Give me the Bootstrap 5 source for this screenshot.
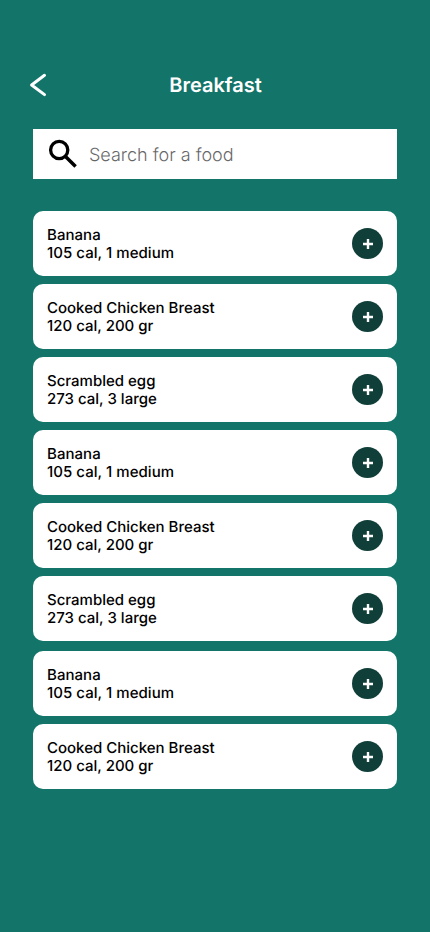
<!DOCTYPE html>
<html lang="en">
<head>
<meta charset="utf-8">
<meta name="viewport" content="width=device-width, initial-scale=1">
<title>Breakfast</title>
<link href="https://cdn.jsdelivr.net/npm/bootstrap@5.3.0/dist/css/bootstrap.min.css" rel="stylesheet">
<style>
body{background:#137469;font-family:Inter,"Liberation Sans",sans-serif;color:#000;min-height:932px;text-rendering:geometricPrecision}
.topbar{margin-top:69px;height:32px;padding:0 28px 0 29px}
.topbar h1{font-size:20px;font-weight:600;line-height:32px}
.back{width:18px;height:24px}
.search{height:50px;margin:28px 33px 0;padding-left:15px}
.search input{font-size:18px;font-weight:300;line-height:22px;height:24px;color:#000;margin:2px 0 0 11px;text-rendering:inherit}
.search input::placeholder{color:#000;opacity:.6}
.foods{margin:32px 33px 0;gap:8px}
.food{height:65px;border-radius:10px;padding:0 14px;font-size:15px;line-height:18px;font-weight:500}
.food:nth-child(7){margin-top:2px}
.food:nth-child(3n+1){letter-spacing:.04px}
.add{width:31px;height:31px;background:#103e39}
</style>
</head>
<body>
<header class="topbar d-flex align-items-center justify-content-between">
<a href="#" class="d-flex" aria-label="Back"><svg class="back" viewBox="0 0 18 24" fill="none" stroke="#fff" stroke-width="3" stroke-linecap="round"><path d="M15.5 2.3 2.6 12 15.5 21.6" stroke-linejoin="round"/></svg></a>
<h1 class="m-0 text-white">Breakfast</h1>
<span class="back"></span>
</header>
<form class="search d-flex align-items-center bg-white">
<svg width="30" height="30" viewBox="0 0 30 30" fill="none" stroke="#000"><circle cx="11.2" cy="11" r="8.6" stroke-width="3.3"/><path d="M17 17 27.6 27.6" stroke-width="3.5"/></svg>
<input class="border-0 p-0 flex-grow-1 bg-transparent" placeholder="Search for a food" aria-label="Search for a food">
</form>
<main class="foods d-flex flex-column" id="foods"></main>
<script src="https://cdn.jsdelivr.net/npm/bootstrap@5.3.0/dist/js/bootstrap.bundle.min.js"></script>
<script>
const items=[["Banana","105 cal, 1 medium"],["Cooked Chicken Breast","120 cal, 200 gr"],["Scrambled egg","273 cal, 3 large"]];
document.getElementById("foods").innerHTML=[0,1,2,0,1,2,0,1].map(i=>`<div class="food bg-white d-flex align-items-center justify-content-between"><div>${items[i][0]}<br>${items[i][1]}</div><button class="add btn p-0 border-0 rounded-circle d-flex align-items-center justify-content-center" aria-label="Add"><svg width="11" height="11" viewBox="0 0 11 11" stroke="#fff" stroke-width="2.4"><path d="M6 1V11M1 6H11"/></svg></button></div>`).join("");
</script>
</body>
</html>
